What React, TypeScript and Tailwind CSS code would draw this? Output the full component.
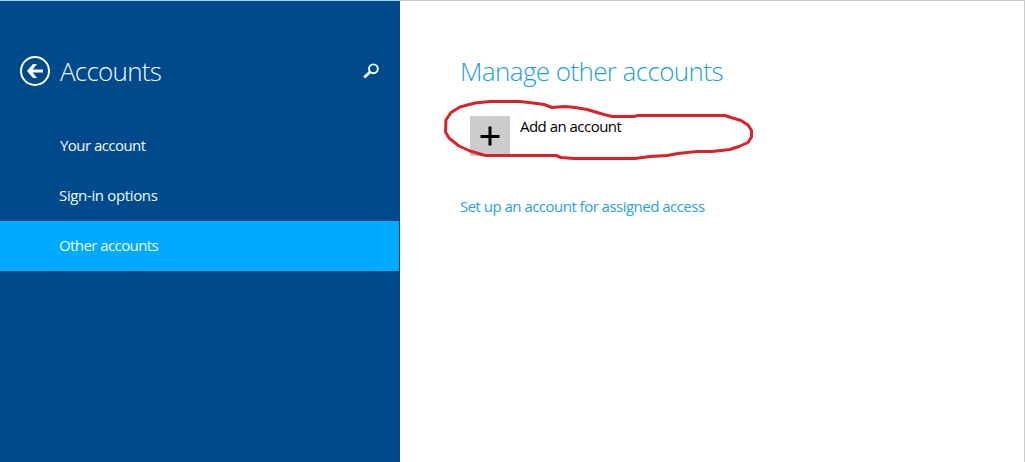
import React from "react";

const items: { label: string; active?: boolean; spacing: string }[] = [
  { label: "Your account", spacing: "tracking-[-0.55px] pl-[60px]" },
  { label: "Sign-in options", spacing: "tracking-[-0.35px] pl-[59px]" },
  { label: "Other accounts", active: true, spacing: "tracking-[-0.58px] pl-[59px]" },
];

function BackIcon() {
  return (
    <svg width="30" height="30" viewBox="0 0 30 30" fill="none" stroke="#fff">
      <circle cx="15" cy="15" r="14" strokeWidth="2" />
      <path d="M23 15H9" strokeWidth="3" />
      <path d="M7 15l6-7h4L11.500 15l5.500 7H13z" fill="#fff" stroke="none" />
    </svg>
  );
}

function SearchIcon() {
  return (
    <svg width="16" height="16" viewBox="0 0 16 16" fill="none" stroke="#fff">
      <circle cx="10.4" cy="5.8" r="4.4" strokeWidth="1.9" />
      <path d="M7 9L1.2 14.4" strokeWidth="2.8" />
    </svg>
  );
}

function Sidebar() {
  return (
    <aside className="w-[400px] shrink-0 bg-[#004a8b] text-[#eefaff]">
      <header className="flex h-[120px] items-start pt-[55px] pl-5">
        <button aria-label="Back" className="block">
          <BackIcon />
        </button>
        <h1 className="-mt-px ml-[10px] w-[303px] text-[26px] leading-[32px] font-light tracking-[-0.75px]">
          Accounts
        </h1>
        <button aria-label="Search" className="mt-[7px] block">
          <SearchIcon />
        </button>
      </header>
      <nav className="pr-px">
        {items.map((item) => (
          <a
            key={item.label}
            className={`flex h-[50px] items-center pb-0.5 text-[15px] ${item.spacing} ${
              item.active ? "bg-[#00aaff]" : ""
            }`}
          >
            {item.label}
          </a>
        ))}
      </nav>
    </aside>
  );
}

function Marker() {
  return (
    <svg
      className="pointer-events-none absolute -top-[18px] -left-[18px]"
      width="312"
      height="64"
      viewBox="442 98 312 64"
      fill="none"
      stroke="#d8232a"
      strokeWidth="3"
      strokeLinejoin="round"
    >
      <path d="M485 155.500L556 155.500L561 157.500L574 158.500L635 158.500L650 156.500L667 155.500L678 153.500L697 151.500L712 151.500L730 149.500L739 146.500L748 142.500L751.500 137L751.500 130.500L748 125L741 120.500L731 117.500L725 115.500L638 115.500L634 116.500L612 116.500L604 114.500L587 109.500L575 107.500L565 106.500L552 107.500L544 104.500L533 103L520 101.500L490 101.500L475 103L460 107L451 112.500L446 120L445.500 132L449 138L459 146L470 151L485 155.500" />
    </svg>
  );
}

export default function App() {
  return (
    <div className="flex h-[462px] w-[1025px] flex-col overflow-hidden bg-white font-['Open_Sans','Noto_Sans',sans-serif]">
      <div className="flex h-px shrink-0">
        <div className="w-[400px] bg-[#9cd3e5]" />
        <div className="flex-1 bg-[#c8c8c8]" />
      </div>
      <div className="flex flex-1">
        <Sidebar />
        <main className="flex-1 border-r border-[#cccccc] pt-[53px] pl-[60px]">
          <h2 className="text-[26px] leading-[34px] font-light tracking-[-0.6px] text-[#1b9fd8]">
            Manage other accounts
          </h2>
          <div className="relative mt-[28px] flex">
            <button className="ml-[10px] flex text-left">
              <span className="flex size-10 items-center justify-center bg-[#cccccc]">
                <svg width="20" height="20" viewBox="0 0 20 20" stroke="#000" strokeWidth="3">
                  <path d="M.5 10.500h19M10 .5v19" />
                </svg>
              </span>
              <span className="ml-[10px] text-[15px] leading-[20px] tracking-[-0.52px] text-black">
                Add an account
              </span>
            </button>
            <Marker />
          </div>
          <a className="mt-10 block text-[15px] leading-[20px] tracking-[-0.52px] text-[#27a3d6]">
            Set up an account for assigned access
          </a>
        </main>
      </div>
    </div>
  );
}
